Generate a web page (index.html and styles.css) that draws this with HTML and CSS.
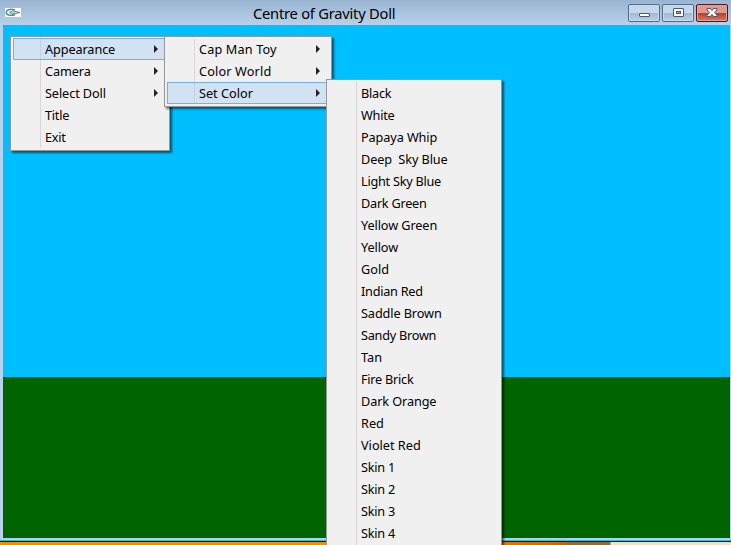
FILE: index.html
```html
<!DOCTYPE html>
<html lang="en">
<head>
<meta charset="utf-8">
<title>Centre of Gravity Doll</title>
<link rel="stylesheet" href="styles.css">
</head>
<body>
<div class="window">
  <header class="titlebar">
    <svg class="app-icon" viewBox="0 0 16 9"><rect width="16" height="9" fill="#fff"/><path d="M10 2C5 .3 1.2 2 1.2 4.5S5 8 10 6.8" fill="none" stroke="#4b9294" stroke-width="1.5"/><path d="M4.5 4.5L7.5 2.8L15 4.5L8 6Z" fill="#c5d7df" stroke="#487584" stroke-width=".8"/></svg>
    <h1>Centre of Gravity Doll</h1>
    <div class="controls">
      <button class="control" aria-label="Minimize"><svg viewBox="0 0 12 10"><rect x="1.5" y="5.5" width="10" height="3" rx=".5" fill="#fff" stroke="#505866"/></svg></button>
      <button class="control" aria-label="Maximize"><svg viewBox="0 0 12 10"><rect x="1.5" y=".5" width="10" height="8" rx=".5" fill="#f8f8f8" stroke="#505866"/><rect x="4.5" y="3.5" width="4" height="2" fill="#8aabd0" stroke="#505866"/></svg></button>
      <button class="control close" aria-label="Close"><svg viewBox="0 0 12 10"><path d="M1 .5H4.5L6 2.5L7.5 .5H11V2L8.5 4.5L11 7V8.5H7.5L6 6.5L4.5 8.5H1V7L3.5 4.5L1 2Z" fill="#f6f6f6" stroke="#59556a"/></svg></button>
    </div>
  </header>
  <main class="scene"><div class="sky"></div><div class="ground"></div></main>
</div>
<div class="frame-bottom"></div>
<div class="desktop"></div>
<ul class="menu main-menu">
  <li class="active parent"><span class="snug">Appearance</span></li>
  <li class="parent"><span class="snug">Camera</span></li>
  <li class="parent"><span class="snug">Select Doll</span></li>
  <li><span class="tight">Title</span></li>
  <li><span class="tight">Exit</span></li>
</ul>
<ul class="menu appearance-menu">
  <li class="parent"><span class="loose">Cap Man Toy</span></li>
  <li class="parent"><span class="snug loose">Color World</span></li>
  <li class="active parent"><span>Set Color</span></li>
</ul>
<ul class="menu color-menu">
  <li><span class="tight">Black</span></li>
  <li><span class="tight">White</span></li>
  <li><span class="snug">Papaya Whip</span></li>
  <li><span class="snug">Deep  Sky Blue</span></li>
  <li><span class="tight">Light Sky Blue</span></li>
  <li><span class="tight">Dark Green</span></li>
  <li><span class="snug">Yellow Green</span></li>
  <li><span class="snug">Yellow</span></li>
  <li><span>Gold</span></li>
  <li><span class="tight">Indian Red</span></li>
  <li><span class="snug">Saddle Brown</span></li>
  <li><span class="tight">Sandy Brown</span></li>
  <li><span>Tan</span></li>
  <li><span class="tight">Fire Brick</span></li>
  <li><span class="snug">Dark Orange</span></li>
  <li><span>Red</span></li>
  <li><span>Violet Red</span></li>
  <li><span class="tight">Skin 1</span></li>
  <li><span class="tight">Skin 2</span></li>
  <li><span class="tight">Skin 3</span></li>
  <li><span class="tight">Skin 4</span></li>
  <li></li>
</ul>
</body>
</html>
```
FILE: styles.css
```css
* { box-sizing: border-box; }
html, body { height: 100%; }
body { margin: 0; overflow: hidden; position: relative; font-family: "Noto Sans", "Open Sans", sans-serif; color: #000; background: #b5cee9; }
.window { height: 538px; padding: 0 1px 0 3px; background: linear-gradient(#99b4d1, #b9d1ea 25px, #b9d1ea); display: flex; flex-direction: column; }
.titlebar { height: 25px; display: flex; flex: none; }
.app-icon { width: 16px; height: 9px; margin: 8px 0 0 2px; }
h1 { flex: 1; margin: 0 0 0 232px; font-size: 14.7px; line-height: 27px; font-weight: 400; letter-spacing: -.23px; white-space: nowrap; }
.controls { display: flex; gap: 2px; padding: 4px 2px 0 0; }
.control { width: 32px; height: 18px; padding: 3px 0 0; border: 1px solid #526a8a; border-radius: 2px; background: linear-gradient(#c5d7ea 0 48%, #9db8d5 49%, #b9d0e8); box-shadow: inset 0 0 0 1px #c9dbed; display: flex; justify-content: center; }
.control svg { width: 12px; height: 10px; }
.close { background: linear-gradient(#df9a8e 0 48%, #bb3a24 49%, #d67b61); border-color: #4b1620; box-shadow: inset 0 0 0 1px #e0a397; }
.scene { flex: 1; display: flex; flex-direction: column; }
.sky { height: 352px; background: #00bfff; }
.ground { flex: 1; background: #006400; }
.frame-bottom { height: 4px; background: linear-gradient(#b5d0e9 0 2px, #25c3e7 2px 3px, #080808 3px); }
.desktop { height: 3px; background: linear-gradient(90deg, #f09000 0 326px, #df7800 502px, #cc6500 565px, #966b35 566px 610px, #f5dfc3 611px); }
.menu { position: absolute; margin: 0; padding: 1px 2px 2px; list-style: none; border: 1px solid #979797; background: linear-gradient(#d7d7d7, #d7d7d7) 29px 2px / 1px calc(100% - 4px) no-repeat #f0f0f0; box-shadow: 2px 2px 2px rgba(0,0,0,.55); font-size: 12.7px; }
.menu li { height: 22px; line-height: 21px; padding-left: 31px; border: 1px solid transparent; position: relative; white-space: pre; }
.menu .active { border-color: #78aee5; background: linear-gradient(#c0d3e5, #c0d3e5) 26px 0 / 1px 100% no-repeat #d1e2f2; }
.snug { letter-spacing: -.1px; }
.tight { letter-spacing: -.25px; }
.loose { letter-spacing: .15px; }
.parent::after { content: ""; position: absolute; right: 8px; top: 6px; border: 4px solid transparent; border-left-color: #222; border-right: 0; }
.main-menu { left: 10px; top: 36px; width: 160px; height: 115px; }
.appearance-menu { left: 164px; top: 36px; width: 168px; height: 71px; }
.color-menu { left: 326px; top: 79px; width: 176px; height: 490px; padding-top: 2px; }
```
